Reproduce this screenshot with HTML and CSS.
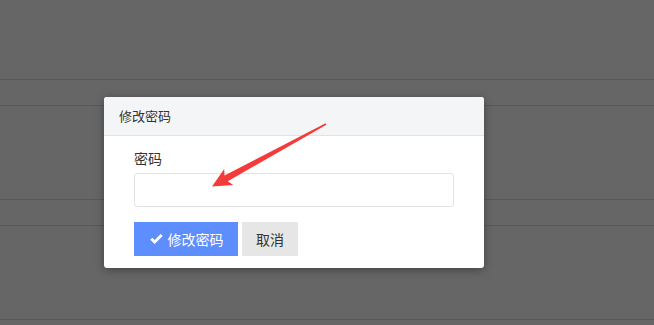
FILE: index.html
```html
<!DOCTYPE html>
<html lang="zh-CN">
<head>
  <meta charset="UTF-8" />
  <meta name="viewport" content="width=device-width, initial-scale=1.0"/>
  <title>修改密码</title>
  <link rel="stylesheet" href="styles.css">
</head>
<body>

  <div class="backdrop">
    <div class="row row-tall"></div>
    <div class="row row-short"></div>
    <div class="row row-mid"></div>
    <div class="row row-short"></div>
    <div class="row row-mid"></div>
  </div>

  <div class="modal">
    <div class="modal-header">修改密码</div>
    <div class="modal-body">
      <label class="field-label" for="password">密码</label>
      <input class="field-input" id="password" type="password">
      <div class="actions">
        <button class="btn btn-primary">
          <svg class="icon-check" viewBox="0 0 16 12" width="15" height="11">
            <path d="M1.2 6.2 L3.4 4 L6 6.6 L12.6 0 L14.8 2.2 L6 11 Z" fill="#fff"/>
          </svg>
          修改密码
        </button>
        <button class="btn btn-default">取消</button>
      </div>
    </div>
  </div>

  <svg class="annotation" width="654" height="325" viewBox="0 0 654 325">
    <polygon fill="#f43b3b" points="212,186.5 233.3,185 227.8,181.3 326.4,124.7 325.6,123.3 224.5,175.5 224.2,169"/>
  </svg>

</body>
</html>
```

FILE: styles.css
```css
body {
  margin: 0;
  background: #666666;
  font-family: "Noto Sans CJK SC", "Noto Sans", sans-serif;
  color: #333;
  overflow: hidden;
}
.backdrop {
  height: 325px;
}
.row {
  border-bottom: 1px solid #595959;
}
.row-tall {
  height: 79px;
}
.row-short {
  height: 25px;
}
.row-mid {
  height: 93px;
}
.modal {
  position: absolute;
  left: 104px;
  top: 97px;
  width: 380px;
  background: #fff;
  border-radius: 3px;
  box-shadow: 0 2px 10px rgba(0, 0, 0, 0.35);
  overflow: hidden;
}
.modal-header {
  height: 38px;
  line-height: 37px;
  padding-left: 15px;
  background: #f4f5f7;
  border-bottom: 1px solid #e2e2e2;
  font-size: 13px;
  color: #333;
}
.modal-body {
  padding: 12px 30px 12px;
}
.field-label {
  display: block;
  font-size: 14px;
  line-height: 20px;
  margin-bottom: 5px;
}
.field-input {
  display: block;
  box-sizing: border-box;
  width: 320px;
  height: 34px;
  border: 1px solid #e3e3e3;
  border-radius: 3px;
  outline: none;
}
.actions {
  display: flex;
  gap: 4px;
  margin-top: 15px;
}
.btn {
  height: 34px;
  border: none;
  border-radius: 0;
  font-family: "Noto Sans CJK SC", "Noto Sans", sans-serif;
  font-size: 14px;
  cursor: pointer;
  display: flex;
  align-items: center;
  justify-content: center;
}
.btn-primary {
  width: 104px;
  background: #5e8dfe;
  color: #fff;
  gap: 4px;
}
.btn-default {
  width: 56px;
  background: #e6e6e6;
  color: #333;
}
.annotation {
  position: absolute;
  left: 0;
  top: 0;
  pointer-events: none;
}
```
